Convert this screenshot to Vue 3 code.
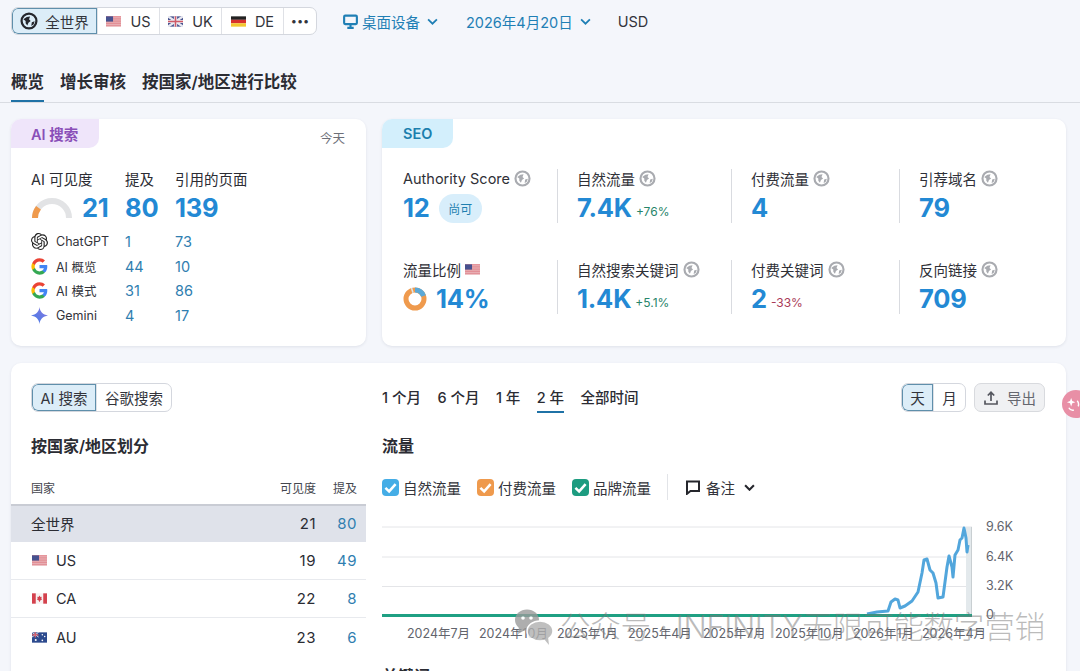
<template>
  <div class="page">
    <svg class="defs" width="0" height="0">
      <defs>
        <symbol id="globe" viewBox="0 0 16 16">
          <circle cx="8" cy="8" r="6.600" fill="none" stroke="currentColor" stroke-width="2" />
          <path d="M3 6.500 6 4.500 9 4 8 6.500 9.500 8 7.500 9.500 6.500 12 5 10 5 8ZM10.500 9l2.500-.8-.8 2.600-2.200 1.600Z" fill="currentColor" />
        </symbol>
        <symbol id="flag-us" viewBox="0 0 16 11">
          <rect width="16" height="11" fill="#d9606a" />
          <path d="M0 1.700h16M0 3.900h16M0 6.100h16M0 8.300h16M0 10.400h16" stroke="#f3e6e8" stroke-width="1" />
          <rect width="7.500" height="5.600" fill="#46518f" />
        </symbol>
        <symbol id="flag-uk" viewBox="0 0 16 11">
          <rect width="16" height="11" fill="#4a5590" />
          <path d="M0 0l16 11M16 0 0 11" stroke="#e8e8f0" stroke-width="2.400" />
          <path d="M8 0v11M0 5.500h16" stroke="#e8e8f0" stroke-width="3.400" />
          <path d="M8 0v11M0 5.500h16" stroke="#cf5a68" stroke-width="1.600" />
        </symbol>
        <symbol id="flag-de" viewBox="0 0 16 11">
          <rect width="16" height="3.700" fill="#222" />
          <rect y="3.700" width="16" height="3.700" fill="#d8302c" />
          <rect y="7.400" width="16" height="3.600" fill="#f3c72f" />
        </symbol>
        <symbol id="flag-ca" viewBox="0 0 16 11">
          <rect width="16" height="11" fill="#f7f2f2" />
          <rect width="4" height="11" fill="#d4424e" />
          <rect x="12" width="4" height="11" fill="#d4424e" />
          <path d="M8 2.200 9 4l1.400-.4-.5 2 1 .6-2.400 1.700V9h-1V7.900L5.100 6.200l1-.6-.5-2L7 4Z" fill="#d4424e" />
        </symbol>
        <symbol id="flag-au" viewBox="0 0 16 11">
          <rect width="16" height="11" fill="#2c4a8e" />
          <path d="M0 0l7 5M7 0 0 5" stroke="#e8e8f0" stroke-width="1" />
          <path d="M3.500 0v5.500M0 2.700h7" stroke="#d9606a" stroke-width="1.400" />
          <circle cx="11" cy="2.500" r=".8" fill="#fff" />
          <circle cx="13.500" cy="4.500" r=".8" fill="#fff" />
          <circle cx="11" cy="8.500" r=".9" fill="#fff" />
          <circle cx="4" cy="8.200" r="1.100" fill="#fff" />
        </symbol>
        <symbol id="google" viewBox="0 0 24 24">
          <path fill="#4285f4" d="M23 12.300c0-.8-.1-1.600-.2-2.300H12v4.400h6.200c-.3 1.400-1.100 2.600-2.300 3.400v2.800h3.700c2.100-2 3.400-4.900 3.400-8.300Z" />
          <path fill="#34a853" d="M12 23.500c3.100 0 5.700-1 7.600-2.800l-3.700-2.900c-1 .7-2.300 1.100-3.900 1.100-3 0-5.500-2-6.400-4.700H1.800v2.900c1.900 3.800 5.800 6.400 10.200 6.400Z" />
          <path fill="#fbbc05" d="M5.600 14.200c-.5-1.400-.5-3 0-4.400V6.900H1.800a11.500 11.500 0 0 0 0 10.200Z" />
          <path fill="#ea4335" d="M12 5.100c1.700 0 3.200.6 4.400 1.700l3.300-3.300C17.700 1.700 15.100.5 12 .5 7.600.5 3.700 3.100 1.800 6.900l3.800 2.900C6.500 7.100 9 5.100 12 5.100Z" />
        </symbol>
      </defs>
    </svg>

    <header class="topbar">
      <div class="seg">
        <button class="seg-btn seg-world on" type="button">
          <svg class="ic-world"><use href="#globe" /></svg>全世界
        </button>
        <button v-for="c in topCountries" :key="c.code" class="seg-btn seg-country" type="button">
          <svg class="flag"><use :href="'#flag-' + c.flag" /></svg>{{ c.code }}
        </button>
        <button class="seg-btn seg-more" type="button">•••</button>
      </div>
      <div class="picker picker-device">
        <svg class="ic-device" viewBox="0 0 16 16" fill="none" stroke="#1f7fb5" stroke-width="2">
          <rect x="2" y="2.500" width="12" height="8" rx="1" />
          <path d="M5 14h6M8 11v3" />
        </svg>
        桌面设备
        <svg class="chev" viewBox="0 0 10 6"><path d="M1 1l4 4 4-4" fill="none" stroke="#1f7fb5" stroke-width="1.600" /></svg>
      </div>
      <div class="picker picker-date">
        2026年4月20日
        <svg class="chev" viewBox="0 0 10 6"><path d="M1 1l4 4 4-4" fill="none" stroke="#1f7fb5" stroke-width="1.600" /></svg>
      </div>
      <div class="currency">USD</div>
    </header>

    <nav class="tabs">
      <span v-for="(t, i) in tabs" :key="t" class="tab" :class="{ on: i === 0 }">{{ t }}</span>
    </nav>

    <section class="cards">
      <div class="card ai-card">
        <div class="card-head">
          <span class="chip chip-ai">AI 搜索</span>
          <span class="today">今天</span>
        </div>
        <div class="ai-top">
          <span class="ai-label">AI 可见度</span>
          <span class="ai-label">提及</span>
          <span class="ai-label">引用的页面</span>

          <div class="ai-score">
            <svg class="gauge" viewBox="0 0 42 22" fill="none" stroke-width="6">
              <path d="M4 20a17 17 0 0 1 34 0" stroke="#e2e3e5" />
              <path d="M4 20a17 17 0 0 1 3.500-10.300" stroke="#ef9a4d" />
            </svg>
            <b class="big">21</b>
          </div>
          <b class="big">80</b>
          <b class="big">139</b>
        </div>
        <div class="ai-rows">
          <template v-for="r in aiRows" :key="r.name">
            <div class="ai-name">
              <svg v-if="r.icon === 'gpt'" class="ai-icon" viewBox="0 0 24 24" fill="#222">
                <path d="M22.2819 9.8211a5.9847 5.9847 0 0 0-.5157-4.9108 6.0462 6.0462 0 0 0-6.5098-2.9A6.0651 6.0651 0 0 0 4.9807 4.1818a5.9847 5.9847 0 0 0-3.9977 2.9 6.0462 6.0462 0 0 0 .7427 7.0966 5.98 5.98 0 0 0 .511 4.9107 6.051 6.051 0 0 0 6.5146 2.9001A5.9847 5.9847 0 0 0 13.2599 24a6.0557 6.0557 0 0 0 5.7718-4.2058 5.9894 5.9894 0 0 0 3.9977-2.9001 6.0557 6.0557 0 0 0-.7475-7.0729zm-9.022 12.6081a4.4755 4.4755 0 0 1-2.8764-1.0408l.1419-.0804 4.7783-2.7582a.7948.7948 0 0 0 .3927-.6813v-6.7369l2.02 1.1686a.071.071 0 0 1 .038.052v5.5826a4.504 4.504 0 0 1-4.4945 4.4944zm-9.6607-4.1254a4.4708 4.4708 0 0 1-.5346-3.0137l.142.0852 4.783 2.7582a.7712.7712 0 0 0 .7806 0l5.8428-3.3685v2.3324a.0804.0804 0 0 1-.0332.0615L9.74 19.9502a4.4992 4.4992 0 0 1-6.1408-1.6464zM2.3408 7.8956a4.485 4.485 0 0 1 2.3655-1.9728V11.6a.7664.7664 0 0 0 .3879.6765l5.8144 3.3543-2.0201 1.1685a.0757.0757 0 0 1-.071 0l-4.8303-2.7865A4.504 4.504 0 0 1 2.3408 7.872zm16.5963 3.8558L13.1038 8.364 15.1192 7.2a.0757.0757 0 0 1 .071 0l4.8303 2.7913a4.4944 4.4944 0 0 1-.6765 8.1042v-5.6772a.79.79 0 0 0-.407-.667zm2.0107-3.0231l-.142-.0852-4.7735-2.7818a.7759.7759 0 0 0-.7854 0L9.409 9.2297V6.8974a.0662.0662 0 0 1 .0284-.0615l4.8303-2.7866a4.4992 4.4992 0 0 1 6.6802 4.66zM8.3065 12.863l-2.02-1.1638a.0804.0804 0 0 1-.038-.0567V6.0742a4.4992 4.4992 0 0 1 7.3757-3.4537l-.142.0805L8.704 5.459a.7948.7948 0 0 0-.3927.6813zm1.0976-2.3654l2.602-1.4998 2.6069 1.4998v2.9994l-2.5974 1.4997-2.6067-1.4997Z" />
              </svg>
              <svg v-else-if="r.icon === 'google'" class="ai-icon"><use href="#google" /></svg>
              <svg v-else class="ai-icon" viewBox="0 0 24 24">
                <defs>
                  <linearGradient id="gem" x1="0" y1="1" x2="1" y2="0">
                    <stop offset="0" stop-color="#3f7be8" />
                    <stop offset="1" stop-color="#8a78e0" />
                  </linearGradient>
                </defs>
                <path d="M12 0c.8 6.500 4.700 10.900 12 12-7.300 1.100-11.200 5.500-12 12-.8-6.500-4.700-10.900-12-12C7.300 10.900 11.200 6.500 12 0Z" fill="url(#gem)" />
              </svg>
              {{ r.name }}
            </div>
            <span class="ai-val">{{ r.a }}</span>
            <span class="ai-val">{{ r.b }}</span>
          </template>
        </div>
      </div>

      <div class="card seo-card">
        <span class="chip chip-seo">SEO</span>
        <div class="seo-grid">
          <div v-for="m in metrics" :key="m.label" class="metric">
            <div class="m-label">
              {{ m.label }}
              <svg v-if="m.flag" class="flag"><use href="#flag-us" /></svg>
              <svg v-else class="ic-info"><use href="#globe" /></svg>
            </div>
            <div class="m-value">
              <svg v-if="m.donut" class="donut" viewBox="0 0 24 24" fill="none" stroke-width="5">
                <circle cx="12" cy="12" r="9" stroke="#ef9a4d" />
                <path d="M12 3a9 9 0 0 1 8.500 6" stroke="#5aa9d8" />
                <path d="M8.500 3.700 10 3.200" stroke="#d9e6ee" />
              </svg>
              <b class="big">{{ m.value }}</b>
              <span v-if="m.badge" class="badge">{{ m.badge }}</span>
              <span v-if="m.delta" class="delta" :class="{ neg: m.delta[0] === '-' }">{{ m.delta }}</span>
            </div>
          </div>
        </div>
      </div>
    </section>

    <section class="card panel">
      <div class="left">
        <div class="seg small">
          <button class="seg-btn on seg-ai" type="button">AI 搜索</button>
          <button class="seg-btn seg-google" type="button">谷歌搜索</button>
        </div>
        <h3 class="title title-left">按国家/地区划分</h3>
        <div class="thead">
          <span class="col-name">国家</span>
          <span class="col-vis">可见度</span>
          <span class="col-men">提及</span>
        </div>
        <div v-for="r in countries" :key="r.name" class="trow" :class="{ active: !r.flag }">
          <span class="col-name">
            <svg v-if="r.flag" class="flag flag-row"><use :href="'#flag-' + r.flag" /></svg>{{ r.name }}
          </span>
          <span class="col-vis num">{{ r.vis }}</span>
          <span class="col-men num link">{{ r.men }}</span>
        </div>
      </div>

      <div class="right">
        <div class="toolbar">
          <div class="ranges">
            <span v-for="(r, i) in ranges" :key="r" class="range" :class="{ on: i === 3 }">{{ r }}</span>
          </div>
          <div class="seg small seg-day">
            <button class="seg-btn on" type="button">天</button>
            <button class="seg-btn" type="button">月</button>
          </div>
          <button class="export" type="button">
            <svg viewBox="0 0 16 16" fill="none" stroke="#55575f" stroke-width="1.700">
              <path d="M8 11V2.500M4.800 5.500 8 2.300l3.200 3.200M2 10.500V14h12v-3.500" />
            </svg>
            导出
          </button>
        </div>
        <h3 class="title">流量</h3>
        <div class="legend">
          <label v-for="l in legend" :key="l.name" class="leg">
            <span class="check" :style="{ background: l.color }">
              <svg viewBox="0 0 10 10"><path d="M2 5.200 4.200 7.300 8 3" fill="none" stroke="#fff" stroke-width="1.500" /></svg>
            </span>
            {{ l.name }}
          </label>
          <span class="leg-sep"></span>
          <span class="leg note">
            <svg class="ic-note" viewBox="0 0 16 16" fill="none" stroke="#25262c" stroke-width="2">
              <path d="M2 2.500h12v9.500H5.500L2 14.800Z" />
            </svg>
            备注
            <svg class="chev dark" viewBox="0 0 10 6"><path d="M1 1l4 4 4-4" fill="none" stroke="#25262c" stroke-width="1.900" /></svg>
          </span>
        </div>

        <svg class="chart" viewBox="0 0 684 124" width="684" height="124">
          <line v-for="y in [9, 39, 68.500]" :key="y" x1="0" x2="590" :y1="y" :y2="y" stroke="#e4e5e8" />
          <rect x="584" y="9" width="6" height="89" fill="#e3e9ec" />
          <line x1="589.500" x2="589.500" y1="9" y2="98" stroke="#c9cfd2" />
          <polyline :points="linePoints" fill="none" stroke="#52a6dc" stroke-width="3" stroke-linejoin="round" />
          <line x1="0" x2="590" y1="97.500" y2="97.500" stroke="#1fa083" stroke-width="3" />
          <text v-for="t in yTicks" :key="t.label" x="604" :y="t.y" class="tick">{{ t.label }}</text>
          <text v-for="t in xTicks" :key="t.label" :x="t.x" y="120" class="tick">{{ t.label }}</text>
        </svg>
        <h3 class="title title-kw">关键词</h3>
      </div>
    </section>

    <div class="float-btn">
      <svg viewBox="0 0 16 16" fill="none">
        <path d="M5.500 1l1.200 3.300L10 5.500 6.700 6.700 5.500 10 4.300 6.700 1 5.500l3.300-1.200Z" fill="#fff" />
        <path d="M3 11.500c1 2 3 3 5.500 2.500M12 4c1.500 2 1.800 4 1 6" stroke="#fff" stroke-width="1.500" />
      </svg>
    </div>
    <div class="watermark">
      <svg class="wechat" viewBox="0 0 41 36">
        <ellipse cx="14" cy="11" rx="12" ry="10.500" fill="#9a9a9a" />
        <path d="M6 18 5 25l7-4Z" fill="#9a9a9a" />
        <circle cx="10" cy="9" r="1.800" fill="#fff" />
        <circle cx="18" cy="9" r="1.800" fill="#fff" />
        <ellipse cx="27" cy="22" rx="13" ry="10" fill="#b0b0b0" stroke="#fff" stroke-width="1.500" />
        <path d="M31 30l5 6-1-8Z" fill="#b0b0b0" />
      </svg>
      公众号 · INFINITY无限可能数字营销
    </div>
  </div>
</template>

<script setup>
const topCountries = [
  { code: 'US', flag: 'us' },
  { code: 'UK', flag: 'uk' },
  { code: 'DE', flag: 'de' },
]
const tabs = ['概览', '增长审核', '按国家/地区进行比较']

const aiRows = [
  { name: 'ChatGPT', icon: 'gpt', a: 1, b: 73 },
  { name: 'AI 概览', icon: 'google', a: 44, b: 10 },
  { name: 'AI 模式', icon: 'google', a: 31, b: 86 },
  { name: 'Gemini', icon: 'gemini', a: 4, b: 17 },
]

const metrics = [
  { label: 'Authority Score', value: '12', badge: '尚可' },
  { label: '自然流量', value: '7.4K', delta: '+76%' },
  { label: '付费流量', value: '4' },
  { label: '引荐域名', value: '79' },
  { label: '流量比例', value: '14%', flag: true, donut: true },
  { label: '自然搜索关键词', value: '1.4K', delta: '+5.1%' },
  { label: '付费关键词', value: '2', delta: '-33%' },
  { label: '反向链接', value: '709' },
]

const countries = [
  { name: '全世界', vis: 21, men: 80 },
  { name: 'US', flag: 'us', vis: 19, men: 49 },
  { name: 'CA', flag: 'ca', vis: 22, men: 8 },
  { name: 'AU', flag: 'au', vis: 23, men: 6 },
]

const ranges = ['1 个月', '6 个月', '1 年', '2 年', '全部时间']
const legend = [
  { name: '自然流量', color: '#45ade6' },
  { name: '付费流量', color: '#ef9a4d' },
  { name: '品牌流量', color: '#1d9c80' },
]

// traced from page coordinates, chart origin sits at 382,518
const trace = [
  [867, 614], [877, 612], [888, 611], [891, 602], [895, 599], [898, 600], [900, 608],
  [905, 606], [912, 601], [918, 592], [922, 573], [924, 560], [927, 559], [930, 570],
  [933, 573], [936, 583], [938, 598], [943, 597], [947, 567], [949, 556], [952, 567],
  [953, 577], [955, 555], [958, 550], [960, 540], [962, 538], [964, 528], [966, 538],
  [967, 552], [968, 545],
]
const linePoints = trace.map(([x, y]) => `${x - 382},${y - 518}`).join(' ')

const yTicks = [
  { label: '9.6K', y: 13 },
  { label: '6.4K', y: 43 },
  { label: '3.2K', y: 72 },
  { label: '0', y: 101 },
]
const xTicks = [
  { label: '2024年7月', x: 25 },
  { label: '2024年10月', x: 97 },
  { label: '2025年1月', x: 175 },
  { label: '2025年4月', x: 246 },
  { label: '2025年7月', x: 321 },
  { label: '2025年10月', x: 393 },
  { label: '2026年1月', x: 471 },
  { label: '2026年4月', x: 540 },
]
</script>

<style>
html, body { margin: 0; background: #f4f6fb; }
</style>

<style scoped>
.page {
  position: relative; width: 1080px; height: 671px; overflow: hidden;
  background: #f4f6fb; color: #2b2c33; box-sizing: border-box; padding: 7px 14px 0 11px;
  font-family: Inter, "Noto Sans CJK SC", sans-serif; font-size: 14.500px;
}
.defs { position: absolute; }
button { font: inherit; color: inherit; background: none; border: none; padding: 0; }

.topbar { display: flex; align-items: center; height: 28px; }
.seg {
  display: flex; height: 28px; box-sizing: border-box; background: #fff;
  border: 1px solid #d4d7de; border-radius: 7px; overflow: hidden;
}
.seg-btn {
  display: flex; align-items: center; justify-content: center; gap: 9px;
  border-right: 1px solid #dfe1e6; font-size: 14.500px; color: #33343b;
}
.seg-btn:last-child { border-right: none; }
.seg-btn.on { background: #dcedf8; box-shadow: inset 0 0 0 1px #5f8fab; border-radius: 6px 0 0 6px; }
.seg-world { width: 86px; gap: 7px; }
.seg-country { width: 62px; }
.seg-more { width: 32px; font-size: 11px; letter-spacing: 0; }
.ic-world { width: 18px; height: 18px; color: #25262c; }
.flag { width: 15px; height: 11px; flex: none; }

.picker { display: flex; align-items: center; color: #1f7fb5; font-size: 14.500px; }
.picker-device { margin-left: 25px; gap: 3px; }
.picker-date { margin-left: 28px; gap: 3px; }
.ic-device { width: 17px; height: 17px; }
.chev { width: 11px; height: 7px; margin-left: 4px; }
.currency { margin-left: 27px; color: #33343b; }

.tabs { display: flex; gap: 16px; height: 39px; margin: 28px -14px 0 -11px; border-bottom: 1px solid #d9dce2; padding-left: 11px; }
.tab { font-size: 16.500px; font-weight: 600; line-height: 26px; height: 39px; box-sizing: border-box; color: #2b2c33; padding-top: 6px; }
.tab.on { border-bottom: 2px solid #1f72a6; }

.cards { display: flex; gap: 16px; margin-top: 16px; }
.card { background: #fff; border-radius: 10px; box-shadow: 0 1px 3px rgba(40, 50, 80, .1); }
.ai-card { width: 355px; height: 227px; flex: none; }
.seo-card { flex: 1; height: 227px; }
.card-head { display: flex; justify-content: space-between; }
.chip {
  display: inline-flex; align-items: center; height: 29px; box-sizing: border-box;
  font-size: 14.500px; font-weight: 600; border-radius: 10px 0 10px 0;
}
.chip-ai { width: 88px; padding-left: 20px; background: #efe5fa; color: #8a4fb8; }
.chip-seo { width: 71px; padding-left: 21px; background: #d3effc; color: #1c7fae; }
.today { font-size: 12.500px; color: #6d6f78; margin: 9px 21px 0 0; }

.ai-top, .ai-rows { display: grid; grid-template-columns: 94px 50px 1fr; padding-left: 20px; align-items: center; }
.ai-top { grid-template-rows: 22px 38px; padding-top: 19px; }
.ai-rows { grid-auto-rows: 24.700px; margin-top: 2px; }
.ai-label { font-size: 14.500px; color: #2b2c33; }
.ai-score { display: flex; align-items: center; gap: 9px; }
.gauge { width: 42px; height: 22px; margin-top: 2px; }
.big { font-size: 25.500px; font-weight: 700; color: #2389d4; line-height: 32px; letter-spacing: -.2px; }
.ai-name { display: flex; align-items: center; gap: 8px; font-size: 12.500px; color: #33343b; }
.ai-icon { width: 17px; height: 17px; flex: none; }
.ai-val { font-size: 14.500px; color: #2f7eb0; }

.seo-grid {
  display: grid; grid-template-columns: 175px 174px 168px 1fr; grid-auto-rows: 54px;
  row-gap: 37px; margin-top: 21px;
}
.metric { padding-left: 19px; border-left: 1px solid #d9dbe0; }
.metric:nth-child(4n + 1) { padding-left: 21px; border-left: none; }
.m-label { display: flex; align-items: center; gap: 4px; height: 18px; font-size: 14.500px; color: #2f3037; }
.ic-info { width: 17px; height: 17px; color: #a9abb0; }
.m-value { display: flex; align-items: center; height: 32px; margin-top: 5px; }
.donut { width: 24px; height: 24px; margin-right: 9px; }
.badge {
  display: inline-flex; align-items: center; justify-content: center; width: 43px; height: 29px;
  margin-left: 9px; border-radius: 15px; background: #d8eefb; color: #1f7fb0; font-size: 12px;
}
.delta { margin: 6px 0 0 4px; font-size: 12px; color: #27856a; }
.delta.neg { color: #a93a58; }

.panel { display: flex; margin-top: 17px; height: 400px; }
.left { width: 355px; flex: none; padding-top: 20px; }
.small { height: 29px; }
.left .seg { display: inline-flex; margin-left: 20px; }
.seg-ai { width: 65px; }
.seg-google { width: 74px; }
.title { margin: 0; font-size: 16px; font-weight: 600; line-height: 24px; color: #2b2c33; }
.title-left { margin: 22px 0 0 20px; }
.thead, .trow { display: flex; align-items: center; padding: 0 9px 0 20px; }
.thead { height: 34px; margin-top: 12px; font-size: 12px; color: #44464e; }
.trow { height: 38px; font-size: 14.500px; border-bottom: 1px solid #e8eaee; box-sizing: border-box; }
.trow:last-child { border-bottom: none; }
.trow.active { background: #dfe2ea; border-top: 2px solid #c9ccd4; border-bottom: none; padding-bottom: 2px; }
.col-name { flex: 1; display: flex; align-items: center; }
.col-vis { width: 50px; text-align: right; }
.col-men { width: 41px; text-align: right; }
.num { font-size: 15px; letter-spacing: .5px; }
.link { color: #2f7eb0; }
.flag-row { margin: 0 9px 0 1px; }

.right { flex: 1; padding: 20px 21px 0 16px; min-width: 0; }
.toolbar { display: flex; align-items: center; height: 29px; }
.ranges { display: flex; gap: 16.500px; flex: 1; height: 29px; }
.range { font-size: 14.500px; line-height: 29px; height: 30px; box-sizing: border-box; font-weight: 500; }
.range.on { border-bottom: 2px solid #1f72a6; }
.seg-day { width: 65px; }
.seg-day .seg-btn { flex: 1; }
.export {
  display: flex; align-items: center; justify-content: center; gap: 8px;
  width: 71px; height: 29px; margin-left: 8px; box-sizing: border-box; border: 1px solid #d8dade;
  border-radius: 7px; background: #f0f1f3; color: #65676f; font-size: 14.500px;
}
.export svg { width: 16px; height: 16px; }
.right > .title { margin-top: 22px; }
.legend { display: flex; align-items: center; height: 30px; margin-top: 14px; color: #33343b; }
.leg { display: flex; align-items: center; gap: 4px; margin-right: 16px; }
.check { display: flex; width: 17px; height: 17px; border-radius: 4px; }
.check svg { width: 17px; height: 17px; }
.leg-sep { width: 1px; height: 26px; background: #e2e4e8; margin: 0 17px 0 0; }
.ic-note { width: 16px; height: 16px; }
.note { gap: 5px; }
.chart { display: block; margin-top: 16px; overflow: visible; }
.tick { font-size: 12.500px; fill: #62646c; font-family: Inter, "Noto Sans CJK SC", sans-serif; }
.title-kw { margin-top: 16px; }

.float-btn {
  position: absolute; left: 1062px; top: 390px; width: 28px; height: 28px; border-radius: 50%;
  background: #e88fa6; display: flex; align-items: center; padding-left: 4px; box-sizing: border-box;
}
.float-btn svg { width: 15px; height: 15px; }
.watermark {
  position: absolute; left: 513px; top: 608px; display: flex; align-items: center; gap: 6px;
  font-size: 30.600px; line-height: 38px; color: rgba(120, 120, 120, .5); white-space: nowrap;
  font-weight: 300; letter-spacing: -.3px;
}
.wechat { width: 41px; height: 36px; opacity: .8; }
</style>
